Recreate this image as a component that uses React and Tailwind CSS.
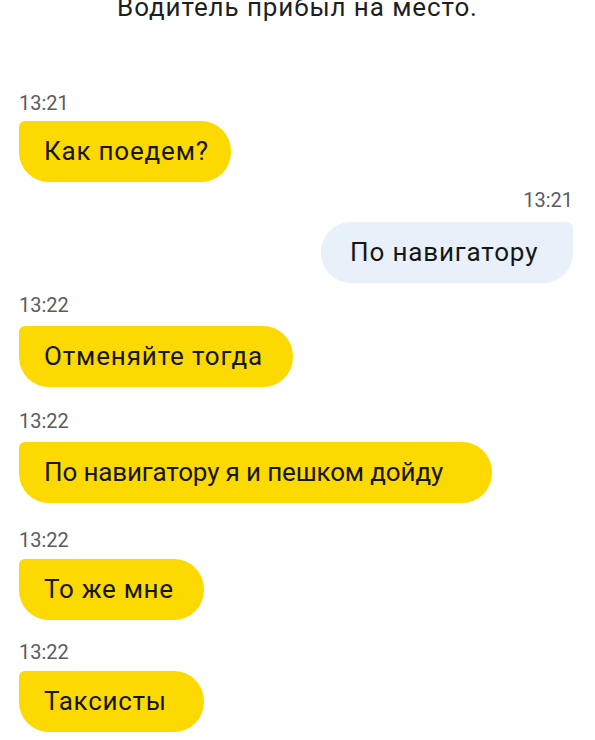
import React from "react";

// offsets measured off the screenshot, so each row carries its own spacing
const messages = [
  { time: "13:21", text: "Как поедем?", mine: false, gap: "mt-[68px]", inner: "mt-[6px] w-[212px] tracking-[0.8px]" },
  { time: "13:21", text: "По навигатору", mine: true, gap: "mt-[6px]", inner: "mt-[10px] w-[252px] tracking-[0.85px]" },
  { time: "13:22", text: "Отменяйте тогда", mine: false, gap: "mt-[10px]", inner: "mt-[9px] w-[274px] tracking-[0.85px]" },
  { time: "13:22", text: "По навигатору я и пешком дойду", mine: false, gap: "mt-[22px]", inner: "mt-[9px] w-[473px] tracking-[-0.15px]" },
  { time: "13:22", text: "То же мне", mine: false, gap: "mt-[25px]", inner: "mt-[7px] w-[185px] tracking-[0.7px]" },
  { time: "13:22", text: "Таксисты", mine: false, gap: "mt-[20px]", inner: "mt-[7px] w-[185px] tracking-[0.7px]" },
];

function Message({ time, text, mine, gap, inner }) {
  return (
    <div className={`flex flex-col ${mine ? "items-end" : "items-start"} ${gap}`}>
      <div className="text-[20px] leading-[24px] text-[#5c5c5c]">{time}</div>
      <div
        className={
          mine
            ? `${inner} h-[61px] flex items-center pl-[29px] bg-[#e8f0fa] rounded-[30px] rounded-tr-[6px] text-[26px] text-[#161616] whitespace-nowrap`
            : `${inner} h-[61px] flex items-center pl-[25px] bg-[#fcd900] rounded-[30px] rounded-tl-[6px] text-[26px] text-[#161616] whitespace-nowrap`
        }
      >
        {text}
      </div>
    </div>
  );
}

export default function App() {
  return (
    <div className="w-[595px] h-[740px] overflow-hidden bg-white font-['Roboto',sans-serif]">
      <div className="mt-[-9px] text-center text-[26px] leading-[32px] tracking-[0.9px] text-[#1f1f1f]">
        Водитель прибыл на место.
      </div>
      <div className="pl-[19px] pr-[22px]">
        {messages.map((m, i) => (
          <Message key={i} {...m} />
        ))}
      </div>
    </div>
  );
}
